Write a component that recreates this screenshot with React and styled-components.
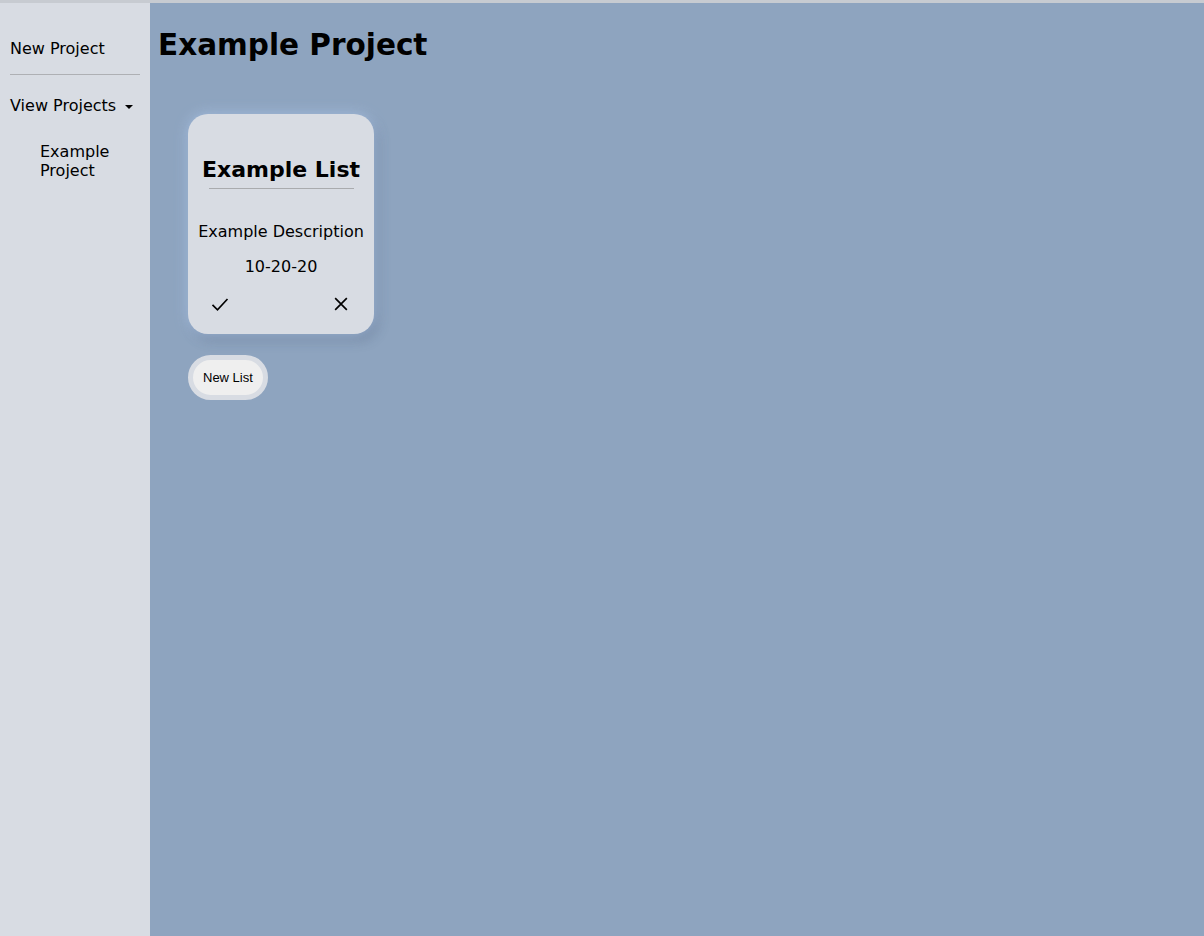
import React from "react";
import styled, { createGlobalStyle } from "styled-components";

const GlobalStyle = createGlobalStyle`
  html, body {
    margin: 0;
    padding: 0;
    height: 100%;
  }
  body {
    font-family: "DejaVu Sans", "Open Sans", sans-serif;
    border-top: 3px solid #c7cbd1;
    box-sizing: border-box;
  }
  #root {
    height: 933px;
  }
`;

const Layout = styled.div`
  display: flex;
  height: 100%;
`;

const Sidebar = styled.nav`
  width: 150px;
  flex-shrink: 0;
  background: #d8dce3;
  padding: 35px 10px 0;
  box-sizing: border-box;
  display: flex;
  flex-direction: column;
`;

const NavItem = styled.div`
  font-size: 16px;
  color: #000;
  display: flex;
  align-items: center;
  gap: 9px;
  line-height: 22px;
`;

const Divider = styled.hr`
  border: none;
  border-top: 1px solid #aeb0b4;
  margin: 14px 0 20px;
  height: 0;
`;

const Caret = styled.span`
  width: 0;
  height: 0;
  border-left: 4px solid transparent;
  border-right: 4px solid transparent;
  border-top: 4px solid #000;
  margin-top: 2px;
`;

const SubItem = styled.div`
  font-size: 16px;
  line-height: 19px;
  margin: 25px 0 0 30px;
  width: 80px;
`;

const Main = styled.main`
  flex: 1;
  background: #8ea4bf;
  padding: 24px 8px;
`;

const Title = styled.h1`
  margin: 0 0 51px;
  font-size: 29.5px;
  font-weight: bold;
  color: #000;
  line-height: 36px;
`;

const Board = styled.div`
  padding-left: 30px;
  display: flex;
  flex-direction: column;
  align-items: flex-start;
  gap: 21px;
`;

const Card = styled.div`
  width: 186px;
  height: 220px;
  box-sizing: border-box;
  background: #d8dce3;
  border-radius: 20px;
  box-shadow: 0 0 14px rgba(170, 195, 230, 0.9), 4px 6px 12px rgba(60, 75, 100, 0.35);
  display: flex;
  flex-direction: column;
  align-items: center;
  padding: 42px 4px 0;
`;

const CardTitle = styled.h2`
  margin: 0;
  font-size: 22px;
  font-weight: bold;
  line-height: 28px;
  align-self: stretch;
  display: flex;
  flex-direction: column;
  align-items: center;
  white-space: nowrap;

  &::after {
    content: "";
    width: 145px;
    margin-top: 4px;
    border-bottom: 1px solid #a9abae;
  }
`;

const CardText = styled.p`
  margin: ${({ $top }) => $top}px 0 0;
  font-size: 16px;
  line-height: 20px;
  white-space: nowrap;
`;

const Actions = styled.div`
  align-self: stretch;
  display: flex;
  justify-content: space-between;
  padding: 0 19px 0 18px;
  margin-top: 17px;
`;

const IconButton = styled.button`
  border: none;
  background: none;
  padding: 0;
  display: flex;
  cursor: pointer;
`;

const NewListButton = styled.button`
  font-family: "Liberation Sans", Arial, sans-serif;
  font-size: 13px;
  background: #efefef;
  color: #000;
  border: 5px solid #d8dce3;
  border-radius: 23px;
  height: 45px;
  padding: 0 10px;
  cursor: pointer;
`;

const Check = () => (
  <svg width="20" height="20" viewBox="0 0 24 24" fill="none" stroke="#000" strokeWidth="2">
    <path d="M3 13 L9 19 L21 6" />
  </svg>
);

const Cross = () => (
  <svg width="20" height="20" viewBox="0 0 24 24" fill="none" stroke="#000" strokeWidth="2">
    <path d="M5 5 L19 19 M19 5 L5 19" />
  </svg>
);

const App = () => {
  return (
    <>
      <GlobalStyle />
      <Layout>
        <Sidebar>
          <NavItem>New Project</NavItem>
          <Divider />
          <NavItem>
            View Projects <Caret />
          </NavItem>
          <SubItem>Example Project</SubItem>
        </Sidebar>
        <Main>
          <Title>Example Project</Title>
          <Board>
            <Card>
              <CardTitle>Example List</CardTitle>
              <CardText $top={33}>Example Description</CardText>
              <CardText $top={15}>10-20-20</CardText>
              <Actions>
                <IconButton>
                  <Check />
                </IconButton>
                <IconButton>
                  <Cross />
                </IconButton>
              </Actions>
            </Card>
            <NewListButton>New List</NewListButton>
          </Board>
        </Main>
      </Layout>
    </>
  );
};

export default App;
